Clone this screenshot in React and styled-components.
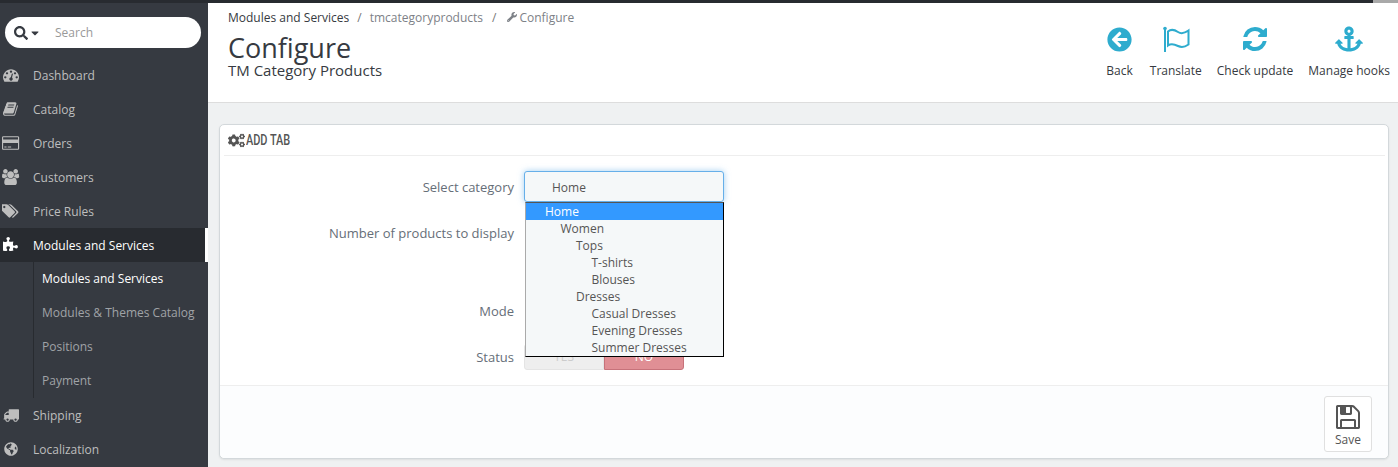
import React from "react";
import styled, { createGlobalStyle } from "styled-components";
import { FaGlobeAmericas, FaSearch, FaCaretDown, FaArrowCircleLeft, FaAnchor, FaWrench, FaCogs } from "react-icons/fa";

const Global = createGlobalStyle`
  html, body { margin: 0; padding: 0; height: 467px; overflow: hidden; background: #eff1f2; }
  body { font-family: "Open Sans", "Liberation Sans", sans-serif; font-size: 12px; color: #555; }
  * { box-sizing: border-box; }
`;

const Page = styled.div`
  width: 1398px;
  height: 467px;
  display: flex;
  flex-direction: column;
  overflow: hidden;
`;

const TopBar = styled.div`
  height: 3px;
  flex: none;
  background: #282b30;
  display: flex;
  justify-content: flex-end;
`;

const TopScroll = styled.div`
  width: 25px;
  background: #a9a9a9;
`;

const Body = styled.div`
  flex: 1;
  display: flex;
  min-height: 0;
`;

const Sidebar = styled.nav`
  width: 208px;
  flex: none;
  background: #363a41;
  display: flex;
  flex-direction: column;
`;

const SearchBox = styled.div`
  margin: 14px 7px 10px 5px;
  height: 31px;
  flex: none;
  border-radius: 16px;
  background: #fff;
  display: flex;
  align-items: center;
  padding-left: 9px;
  color: #363a41;
  font-size: 12px;

  svg:first-child { width: 14px; height: 14px; }
`;

const SearchHint = styled.span`
  margin-left: 14px;
  color: #999;
`;

const Caret = styled(FaCaretDown)`
  font-size: 12px;
  margin-left: 1px;
`;

const MenuRow = styled.div`
  height: 34px;
  flex: none;
  width: ${(p) => (p.$active ? "205px" : "208px")};
  display: flex;
  align-items: center;
  padding-left: 3px;
  font-size: 12px;
  color: ${(p) => (p.$active ? "#fff" : "#bebebe")};
  background: ${(p) => (p.$active ? "#282b30" : "transparent")};
  box-shadow: ${(p) => (p.$active ? "3px 0 0 #fff" : "none")};
`;

const MenuIcon = styled.span`
  width: 16px;
  height: 16px;
  flex: none;
  display: flex;
  justify-content: center;
  align-items: center;

  svg { height: 16px; width: auto; flex: none; }
`;

const GlobeIcon = styled(FaGlobeAmericas)`
  && { height: 14px; }
`;

const MenuLabel = styled.span`
  margin-left: 14px;
`;

const SubMenu = styled.div`
  margin-left: 33px;
  padding-bottom: 1px;
  border-left: 1px solid #282b30;
  display: flex;
  flex-direction: column;
`;

const SubRow = styled.div`
  height: 34px;
  margin-top: ${(p) => (p.$first ? "-1px" : "0")};
  display: flex;
  align-items: center;
  padding-left: 8px;
  font-size: 12px;
  white-space: nowrap;
  color: ${(p) => (p.$active ? "#fff" : "#a0a3a7")};
`;

const Main = styled.main`
  flex: 1;
  display: flex;
  flex-direction: column;
  min-width: 0;
`;

const Header = styled.header`
  height: 100px;
  flex: none;
  background: #fff;
  border-bottom: 1px solid #ddd;
  display: flex;
  justify-content: space-between;
  padding: 0 8px 0 20px;
`;

const TitleBlock = styled.div`
  display: flex;
  flex-direction: column;
  padding-top: 6px;
`;

const Crumbs = styled.div`
  display: flex;
  align-items: center;
  font-size: 12px;
  height: 16px;
  color: #363a41;
`;

const CrumbMuted = styled.span`
  color: #7d8187;
  display: inline-flex;
  align-items: center;
  gap: 2px;

  svg { width: 10px; height: 10px; }
`;

const Slash = styled.span`
  color: #777;
  margin: 0 ${(p) => p.$r}px 0 ${(p) => p.$l}px;
`;

const Title = styled.h1`
  margin: 9px 0 0;
  font-size: 27px;
  line-height: 28px;
  font-weight: 400;
  color: #363a41;
`;

const SubTitle = styled.h2`
  margin: 0;
  font-size: 15px;
  line-height: 16px;
  font-weight: 400;
  color: #363a41;
`;

const Actions = styled.div`
  display: flex;
  padding-top: 22px;
`;

const Action = styled.a`
  display: flex;
  flex-direction: column;
  align-items: center;
  margin-left: ${(p) => p.$gap}px;
  font-size: 12px;
  color: #363a41;
`;

const ActionIcon = styled.span`
  height: 28px;
  display: flex;
  align-items: center;
  justify-content: center;
  color: #2eacce;

  svg {
    width: ${(p) => p.$size}px;
    height: ${(p) => p.$size}px;
  }
`;

const ActionLabel = styled.span`
  margin-top: 9px;
  line-height: 17px;
`;

const Content = styled.div`
  flex: 1;
  padding: 21px 9px 9px 11px;
  min-height: 0;
`;

const Card = styled.section`
  height: 335px;
  background: #fff;
  border: 1px solid #d3d8db;
  border-radius: 5px;
  box-shadow: 0 1px 2px rgba(0, 0, 0, 0.08);
  display: flex;
  flex-direction: column;
`;

const CardHead = styled.div`
  height: 31px;
  flex: none;
  margin: 0 3px 0 4px;
  padding-left: 4px;
  border-bottom: 1px solid #eee;
  display: flex;
  align-items: center;
  gap: 1px;
  color: #555;

  svg { width: 17px; height: 15px; flex: none; }
`;

const CardHeadText = styled.span`
  font-family: "Roboto", sans-serif;
  font-weight: 500;
  font-size: 14px;
  transform: scaleX(0.78);
  transform-origin: left center;
`;

const Form = styled.div`
  flex: 1;
  position: relative;
  display: flex;
  flex-direction: column;
  padding-top: 15px;
`;

const FormRow = styled.div`
  display: flex;
  align-items: center;
  height: ${(p) => p.$h}px;
  margin-top: ${(p) => p.$top || 0}px;
  flex: none;
`;

const Label = styled.label`
  width: 294px;
  text-align: right;
  font-size: 13px;
  color: #666e78;
`;

const Field = styled.div`
  margin-left: 10px;
  position: relative;
`;

const SelectBox = styled.div`
  width: 200px;
  height: 31px;
  border: 1px solid #66afe9;
  border-radius: 3px;
  background: #f5f8f9;
  box-shadow: 0 0 6px rgba(102, 175, 233, 0.6);
  display: flex;
  align-items: center;
  padding: 1px 0 0 27px;
  font-size: 12px;
  color: #555;
`;

const DropList = styled.ul`
  position: absolute;
  z-index: 2;
  left: 1px;
  top: 31px;
  width: 199px;
  margin: 0;
  padding: 0;
  list-style: none;
  background: #f5f8f9;
  border: 1px solid #000;
  border-left-color: #aaa;
  border-top-color: #555;
`;

const DropItem = styled.li`
  height: 17px;
  line-height: 17px;
  font-size: 12px;
  padding-left: ${(p) => 19 + p.$depth * 15.5}px;
  color: ${(p) => (p.$selected ? "#fff" : "#555")};
  background: ${(p) => (p.$selected ? "#3399ff" : "transparent")};
`;

const Switch = styled.div`
  width: 160px;
  height: 26px;
  display: flex;
  font-size: 12px;
  text-align: center;
  line-height: 24px;
`;

const SwitchSide = styled.div`
  width: 80px;
  border-radius: ${(p) => (p.$on ? "0 3px 3px 0" : "3px 0 0 3px")};
  background: ${(p) => (p.$on ? "#e08f95" : "#eee")};
  border: 1px solid ${(p) => (p.$on ? "#c7727a" : "#e4e4e4")};
  color: ${(p) => (p.$on ? "#fff" : "#ccc")};
`;

const CardFoot = styled.div`
  height: 73px;
  flex: none;
  background: #fcfdfe;
  border-top: 1px solid #eee;
  border-radius: 0 0 5px 5px;
  display: flex;
  justify-content: flex-end;
  padding: 10px 16px 0 0;
`;

const SaveButton = styled.button`
  width: 48px;
  height: 56px;
  padding: 0;
  background: #fff;
  border: 1px solid #e0e0e0;
  border-radius: 3px;
  display: flex;
  flex-direction: column;
  align-items: center;
  font-family: inherit;
  font-size: 12px;
  color: #555;

  svg { width: 28px; height: 28px; margin-top: 6px; color: #555; }
`;

// Font Awesome 4 glyphs, the package only ships the redrawn 5.x set
const Glyph = ({ d, w = 1792 }) => (
  <svg viewBox={`0 0 ${w} 1792`} fill="currentColor"><path d={d} /></svg>
);

const tachometer = "M384 1152q0-53-37.500-90.500t-90.500-37.500-90.500 37.500-37.500 90.500 37.500 90.500 90.500 37.500 90.500-37.500 37.500-90.500zm192-448q0-53-37.500-90.500t-90.500-37.500-90.500 37.500-37.500 90.500 37.500 90.500 90.500 37.500 90.500-37.500 37.500-90.500zm428 481l101-382q6-26-7.500-48.500t-38.500-29.500-48 6.500-30 39.500l-101 382q-60 5-107 43.500t-63 98.500q-20 77 20 146t117 89 146-20 89-117q16-60-6-117t-72-91zm660-33q0-53-37.500-90.500t-90.500-37.500-90.500 37.500-37.500 90.500 37.500 90.500 90.500 37.500 90.500-37.500 37.500-90.500zm-640-640q0-53-37.500-90.500t-90.500-37.500-90.500 37.500-37.500 90.500 37.500 90.500 90.500 37.500 90.500-37.500 37.500-90.500zm448 192q0-53-37.500-90.500t-90.500-37.500-90.500 37.500-37.500 90.500 37.500 90.500 90.500 37.500 90.500-37.500 37.500-90.500zm320 448q0 261-141 483-19 29-54 29h-1402q-35 0-54-29-141-221-141-483 0-182 71-348t191-286 286-191 348-71 348 71 286 191 191 286 71 348z";
const book = "M1639 478q40 57 18 129l-275 906q-19 64-76.500 107.500t-122.500 43.500h-923q-77 0-148.500-53.500t-99.500-131.500q-24-67-2-127 0-4 3-27t4-37q1-8-3-21.500t-3-19.500q2-11 8-21t16.500-23.500 16.500-23.500q23-38 45-91.500t30-91.500q3-10 .5-30t-.5-28q3-11 17-28t17-23q21-36 42-92t25-90q1-9-2.500-32t.5-28q4-13 22-30.500t22-22.500q19-26 42.500-84.500t27.500-96.500q1-8-3-25.500t-2-26.500q2-8 9-18t18-23 17-21q8-12 16.500-30.500t15-35 16-36 19.500-32 26.500-23.500 36-11.500 47.500 5.500l-1 3q38-9 51-9h761q74 0 114 56t18 130l-274 906q-36 119-71.500 153.500t-128.500 34.500h-869q-27 0-38 15-11 16-1 43 24 70 144 70h923q29 0 56-15.500t35-41.500l300-987q7-22 5-57 38 15 59 43zm-1064 2q-4 13 2 22.500t20 9.500h608q13 0 25.500-9.500t16.500-22.500l21-64q4-13-2-22.500t-20-9.500h-608q-13 0-25.500 9.500t-16.500 22.500zm-83 256q-4 13 2 22.500t20 9.500h608q13 0 25.500-9.500t16.500-22.500l21-64q4-13-2-22.500t-20-9.500h-608q-13 0-25.500 9.500t-16.500 22.500z";
const card = "M1760 128q66 0 113 47t47 113v1216q0 66-47 113t-113 47h-1600q-66 0-113-47t-47-113v-1216q0-66 47-113t113-47h1600zm-1600 128q-13 0-22.500 9.500t-9.500 22.500v224h1664v-224q0-13-9.500-22.500t-22.500-9.500h-1600zm1600 1280q13 0 22.500-9.500t9.500-22.500v-608h-1664v608q0 13 9.500 22.500t22.500 9.500h1600zm-1504-128v-128h256v128h-256zm384 0v-128h384v128h-384z";
const users = "M593 896q-162 5-265 128h-134q-82 0-138-40.500t-56-118.500q0-353 124-353 6 0 43.500 21t97.500 42.500 119 21.500q67 0 133-23-5 37-5 66 0 139 81 256zm1071 637q0 120-73 189.500t-194 69.500h-874q-121 0-194-69.500t-73-189.500q0-53 3.500-103.500t14-109 26.500-108.500 43-97.500 62-81 85.500-53.500 111.500-20q10 0 43 21.500t73 48 107 48 135 21.500 135-21.500 107-48 73-48 43-21.500q61 0 111.500 20t85.500 53.500 62 81 43 97.500 26.500 108.500 14 109 3.500 103.500zm-1024-1277q0 106-75 181t-181 75-181-75-75-181 75-181 181-75 181 75 75 181zm704 384q0 159-112.500 271.500t-271.500 112.500-271.500-112.500-112.500-271.500 112.500-271.500 271.500-112.500 271.500 112.500 112.500 271.500zm576 225q0 78-56 118.500t-138 40.500h-134q-103-123-265-128 81-117 81-256 0-29-5-66 66 23 133 23 59 0 119-21.500t97.500-42.500 43.500-21q124 0 124 353zm-128-609q0 106-75 181t-181 75-181-75-75-181 75-181 181-75 181 75 75 181z";
const tags = "M384 448q0-53-37.500-90.500t-90.500-37.500-90.500 37.500-37.500 90.500 37.500 90.500 90.500 37.500 90.500-37.500 37.500-90.500zm1067 576q0 53-37 90l-491 492q-39 37-91 37-53 0-90-37l-715-716q-38-37-64.500-101t-26.500-117v-416q0-52 38-90t90-38h416q53 0 117 26.500t102 64.500l715 714q37 39 37 91zm384 0q0 53-37 90l-491 492q-39 37-91 37-36 0-59-14t-53-45l470-470q37-37 37-90 0-52-37-91l-715-714q-38-38-102-64.500t-117-26.500h224q53 0 117 26.500t102 64.500l715 714q37 39 37 91z";
const puzzle = "M1664 1098q0 81-44.500 135t-123.500 54q-41 0-77.500-17.500t-59-38-56.500-38-71-17.500q-110 0-110 124 0 39 16 115t15 115v5q-22 0-33 1-34 3-97.500 11.500t-115.500 13.500-98 5q-61 0-103-26.500t-42-83.500q0-37 17.500-71t38-56.500 38-59 17.500-77.500q0-79-54-123.500t-135-44.500q-84 0-143 45.500t-59 127.500q0 43 15 83t33.500 64.500 33.500 53 15 50.500q0 45-46 89-37 35-117 35-95 0-245-24-9-2-27.500-4t-27.500-4l-13-2q-1 0-3-1-2 0-2-1v-1024q2 1 17.500 3.500t34 5 21.500 3.500q150 24 245 24 80 0 117-35 46-44 46-89 0-22-15-50.500t-33.500-53-33.500-64.500-15-83q0-82 59-127.500t144-45.500q80 0 134 44.500t54 123.500q0 41-17.500 77.500t-38 59-38 56.500-17.500 71q0 57 42 83.500t103 26.500q64 0 180-15t163-17v2q-1 2-3.500 17.500t-5 34-3.500 21.500q-24 150-24 245 0 80 35 117 44 46 89 46 22 0 50.500-15t53-33.500 64.500-33.500 83-15q82 0 127.500 59t45.500 143z";
const truck = "M640 1408q0-52-38-90t-90-38-90 38-38 90 38 90 90 38 90-38 38-90zm-384-512h384v-256h-158q-13 0-22 9l-195 195q-9 9-9 22v30zm1280 512q0-52-38-90t-90-38-90 38-38 90 38 90 90 38 90-38 38-90zm256-1088v1024q0 15-4 26.500t-13.500 18.500-16.500 11.500-23.500 6-22.500 2-25.500 0-22.500-.500q0 106-75 181t-181 75-181-75-75-181h-384q0 106-75 181t-181 75-181-75-75-181h-64q-3 0-22.500.5t-25.500 0-22.500-2-23.500-6-16.500-11.500-13.500-18.500-4-26.500q0-26 19-45t45-19v-320q0-8-.500-35t0-38 2.500-34.500 6.500-37 14-30.500 22.500-30l198-198q19-19 50.500-32t58.500-13h160v-192q0-26 19-45t45-19h1024q26 0 45 19t19 45z";
const refresh = "M1639 1056q0 5-1 7-64 268-268 434.500t-478 166.500q-146 0-282.500-55t-243.500-157l-129 129q-19 19-45 19t-45-19-19-45v-448q0-26 19-45t45-19h448q26 0 45 19t19 45-19 45l-137 137q71 66 161 102t187 36q134 0 250-65t186-179q11-17 53-117 8-23 30-23h192q13 0 22.500 9.500t9.500 22.500zm25-800v448q0 26-19 45t-45 19h-448q-26 0-45-19t-19-45 19-45l138-138q-148-137-349-137-134 0-250 65t-186 179q-11 17-53 117-8 23-30 23h-199q-13 0-22.500-9.500t-9.500-22.500v-7q65-268 270-434.500t480-166.500q146 0 284 55.500t245 156.500l130-129q19-19 45-19t45 19 19 45z";
const save = "M512 1536h768v-384h-768v384zm896 0h128v-896q0-14-10-38.500t-20-34.500l-281-281q-10-10-34-20t-39-10v416q0 40-28 68t-68 28h-576q-40 0-68-28t-28-68v-416h-128v1280h128v-416q0-40 28-68t68-28h832q40 0 68 28t28 68v416zm-384-928v-320q0-13-9.500-22.500t-22.500-9.500h-192q-13 0-22.500 9.500t-9.500 22.500v320q0 13 9.500 22.500t22.500 9.500h192q13 0 22.500-9.500t9.500-22.500zm640 32v928q0 40-28 68t-68 28h-1344q-40 0-68-28t-28-68v-1344q0-40 28-68t68-28h928q40 0 88 20t76 48l280 280q28 28 48 76t20 88z";

const FlagIcon = () => (
  <svg viewBox="0 0 28 28" fill="none" stroke="currentColor" strokeWidth="2">
    <path d="M3 3v24" />
    <circle cx="3" cy="3.500" r="1.800" fill="currentColor" stroke="none" />
    <path d="M6 6.500C9.500 3.500 13 5 16 7c3 2 7 1 10.500-1.500v14c-3.500 2.500-7.500 3-10.500 1.500-3-1.500-6.500-3-10-.5z" />
  </svg>
);

const items = [
  { d: tachometer, label: "Dashboard" },
  { d: book, label: "Catalog" },
  { d: card, w: 1920, label: "Orders" },
  { d: users, w: 1920, label: "Customers" },
  { d: tags, w: 1920, label: "Price Rules" },
];

const subItems = ["Modules and Services", "Modules & Themes Catalog", "Positions", "Payment"];

const categories = [
  ["Home", 0], ["Women", 1], ["Tops", 2], ["T-shirts", 3], ["Blouses", 3],
  ["Dresses", 2], ["Casual Dresses", 3], ["Evening Dresses", 3], ["Summer Dresses", 3],
];

export default function App() {
  return (
    <Page>
      <Global />
      <TopBar><TopScroll /></TopBar>
      <Body>
        <Sidebar>
          <SearchBox>
            <FaSearch />
            <Caret />
            <SearchHint>Search</SearchHint>
          </SearchBox>
          {items.map((it) => (
            <MenuRow key={it.label}>
              <MenuIcon><Glyph d={it.d} w={it.w} /></MenuIcon>
              <MenuLabel>{it.label}</MenuLabel>
            </MenuRow>
          ))}
          <MenuRow $active>
            <MenuIcon><Glyph d={puzzle} /></MenuIcon>
            <MenuLabel>Modules and Services</MenuLabel>
          </MenuRow>
          <SubMenu>
            {subItems.map((s, i) => <SubRow key={s} $first={i === 0} $active={i === 0}>{s}</SubRow>)}
          </SubMenu>
          <MenuRow><MenuIcon><Glyph d={truck} /></MenuIcon><MenuLabel>Shipping</MenuLabel></MenuRow>
          <MenuRow><MenuIcon><GlobeIcon /></MenuIcon><MenuLabel>Localization</MenuLabel></MenuRow>
        </Sidebar>
        <Main>
          <Header>
            <TitleBlock>
              <Crumbs>
                Modules and Services
                <Slash $l={8} $r={8}>/</Slash>
                <CrumbMuted>tmcategoryproducts</CrumbMuted>
                <Slash $l={9} $r={11}>/</Slash>
                <CrumbMuted><FaWrench />Configure</CrumbMuted>
              </Crumbs>
              <Title>Configure</Title>
              <SubTitle>TM Category Products</SubTitle>
            </TitleBlock>
            <Actions>
              <Action $gap={0}><ActionIcon $size={25}><FaArrowCircleLeft /></ActionIcon><ActionLabel>Back</ActionLabel></Action>
              <Action $gap={17}><ActionIcon $size={28}><FlagIcon /></ActionIcon><ActionLabel>Translate</ActionLabel></Action>
              <Action $gap={15}><ActionIcon $size={28}><Glyph d={refresh} /></ActionIcon><ActionLabel>Check update</ActionLabel></Action>
              <Action $gap={15}><ActionIcon $size={28}><FaAnchor /></ActionIcon><ActionLabel>Manage hooks</ActionLabel></Action>
            </Actions>
          </Header>
          <Content>
            <Card>
              <CardHead><FaCogs /><CardHeadText>ADD TAB</CardHeadText></CardHead>
              <Form>
                <FormRow $h={31}>
                  <Label>Select category</Label>
                  <Field>
                    <SelectBox>Home</SelectBox>
                    <DropList>
                      {categories.map(([name, depth]) => (
                        <DropItem key={name} $depth={depth} $selected={name === "Home"}>{name}</DropItem>
                      ))}
                    </DropList>
                  </Field>
                </FormRow>
                <FormRow $h={31} $top={15}><Label>Number of products to display</Label></FormRow>
                <FormRow $h={31} $top={47}><Label>Mode</Label></FormRow>
                <FormRow $h={26} $top={18}>
                  <Label>Status</Label>
                  <Field>
                    <Switch><SwitchSide>YES</SwitchSide><SwitchSide $on>NO</SwitchSide></Switch>
                  </Field>
                </FormRow>
              </Form>
              <CardFoot>
                <SaveButton><Glyph d={save} />Save</SaveButton>
              </CardFoot>
            </Card>
          </Content>
        </Main>
      </Body>
    </Page>
  );
}
